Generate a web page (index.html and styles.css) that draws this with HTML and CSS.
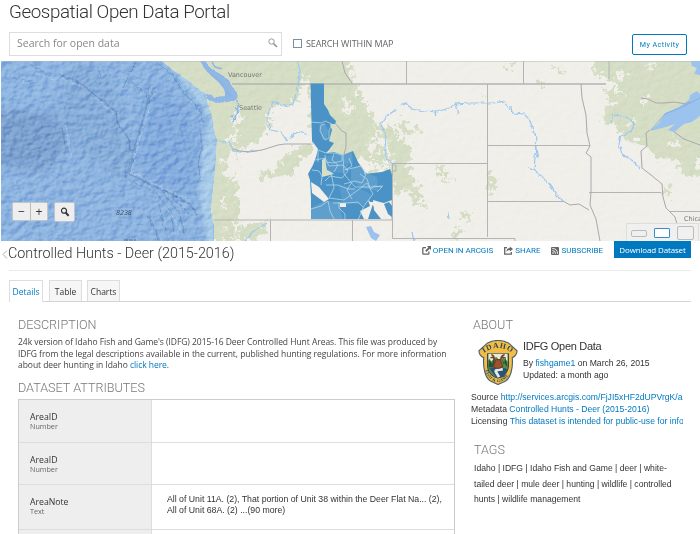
FILE: index.html
```html
<!DOCTYPE html>
<html lang="en">
<head>
<meta charset="utf-8">
<title>Geospatial Open Data Portal</title>
<link rel="stylesheet" href="styles.css">
</head>
<body>
<header class="header">
  <h1 class="site-title">Geospatial Open Data Portal</h1>
  <div class="search-row">
    <div class="search-box"><span>Search for open data</span>
      <svg width="10" height="10" viewBox="0 0 10 10"><circle cx="3.5" cy="3.5" r="2.7" fill="none" stroke="#999"/><path d="M5.6 5.6 9 9" stroke="#999" stroke-width="1.7"/></svg>
    </div>
    <div class="within"><i class="checkbox"></i><span>SEARCH WITHIN MAP</span></div>
    <button class="activity">My Activity</button>
  </div>
</header>

<section class="map">
  <svg class="basemap" viewBox="1 61 699 180" width="699" height="180">
    <defs>
      <filter id="relief" x="0" y="0" width="100%" height="100%" color-interpolation-filters="sRGB">
        <feTurbulence type="fractalNoise" baseFrequency=".13 .16" numOctaves="3" seed="8" result="n"/>
        <feDiffuseLighting in="n" surfaceScale="2.2" lighting-color="#fff"><feDistantLight azimuth="225" elevation="31"/></feDiffuseLighting>
      </filter>
      <filter id="rough" x="-10%" y="-10%" width="120%" height="120%" color-interpolation-filters="sRGB">
        <feTurbulence type="fractalNoise" baseFrequency=".17" numOctaves="4" seed="4" result="n"/>
        <feDisplacementMap in="SourceGraphic" in2="n" scale="20" xChannelSelector="R" yChannelSelector="G"/>
      </filter>
      <filter id="wiggle" x="-10%" y="-10%" width="120%" height="120%" color-interpolation-filters="sRGB">
        <feTurbulence type="fractalNoise" baseFrequency=".22" numOctaves="2" seed="9" result="n"/>
        <feDisplacementMap in="SourceGraphic" in2="n" scale="4" xChannelSelector="R" yChannelSelector="G"/>
      </filter>
      <filter id="soft"><feGaussianBlur stdDeviation="5"/></filter>
      <filter id="shelf-blur"><feGaussianBlur stdDeviation="1.5"/></filter>
      <clipPath id="land"><path d="M162 61 172 69 188 80 200 90 208 95 214 98 224 100 225 91 219 83 210 75 203 67 201 61H203L212 69 222 75 229 80 234 90 238 97 234 101 224 101 206 96 209 107 213 120 214 130 217 139 216 160 214 181 212 199 211 211 214 225 214 241H700V61Z"/></clipPath>
      <clipPath id="sea"><path d="M1 61H162L188 80 208 95 213 120 217 139 216 160 212 199 214 241H1Z"/></clipPath>
    </defs>
    <rect x="1" y="61" width="699" height="180" fill="#8db4e0"/>
    <g clip-path="url(#sea)">
      <g filter="url(#soft)">
        <path d="M-9 110 50 112 64 125 62 158 42 171-9 166Z" fill="#7ba2d0"/>
        <path d="M78 61 112 82 124 125 133 154 128 182 92 158 63 145 54 85Z" fill="#86add9"/>
        <path d="M151 82 190 110 200 145 195 195 155 190 137 160Z" fill="#83abdd"/>
        <path d="M1 52H80L60 100 1 103Z" fill="#8eb5e1"/>
      </g>
      <path filter="url(#shelf-blur)" d="M158 57 175 73 187 87 202 106 210 120 205 134 202 153 201 175 199 193 203 215 207 245H220L217 137 209 96 185 74 169 57Z" fill="#a7cae8"/>
      <g fill="none" stroke="#5f87b8" stroke-width="1.5" opacity=".6" filter="url(#wiggle)">
        <path d="M59 75 74 80 83 84 89 91 99 98 108 105 116 112 118 124 123 131 129 139 130 150"/>
        <path d="M154 87 146 108 138 137 129 173 149 184 162 190 175 196 190 204 197 215"/>
        <path d="M149 86 145 113 136 141 126 178M137 61 129 75 123 88M131 82 151 97M158 63 173 76 183 92 199 108 204 123M200 130 202 146 198 164 201 182" stroke-width="1"/>
        <path d="M157 194 171 212 174 233M163 193 180 215 184 235M173 198 189 214M128 180 151 190M159 204 165 231M148 215 160 241M62 128 66 150M30 65 45 73M12 78 35 83M98 67 101 80" stroke-width="1"/>
      </g>
      <g fill="none" stroke="#b1d0ee" stroke-width=".9" opacity=".7" filter="url(#wiggle)"><path d="M157 87 149 110 140 138 131 172 164 188 190 201M61 78 84 87 99 101 115 115M168 209 182 232M35 73 54 79M66 124 71 158"/></g>
    </g>
    <g clip-path="url(#land)">
      <rect x="155" y="61" width="545" height="180" fill="#f0efea"/>
      <path d="M150 50H240V125L222 140H205Z" fill="#d5dec5"/>
      <g fill="#d5dec5" filter="url(#rough)">
        <path d="M150 50H345L352 77 362 99 372 118 379 127 367 130 374 144 385 157 390 170 377 160 366 160 347 160 330 156 325 141 315 127 310 115V85L304 75 300 95 292 105 277 105 270 111 268 126 263 136 260 142 247 147 238 151 236 180 238 200 234 241H195V90Z"/>
        <path d="M259 173 274 170 282 162 292 150 304 143 316 144 313 153 298 162 294 173 280 177 264 180Z"/>
        <path d="M325 83 350 88 367 105 372 130 380 144 390 158 378 152 365 159 352 148 345 154 335 140 330 125Z"/>
        <path d="M374 128 388 125 403 139 397 143 382 137ZM386 141 409 144 413 163 400 160 390 151ZM392 154 405 160 414 176 426 209 416 204 407 189 397 197 393 185 389 170ZM400 121 409 123 411 136 403 133Z"/>
        <path d="M241 226 260 223 270 219 264 234 252 241H233ZM333 60H347L353 72 335 80ZM369 166 381 168 376 180ZM435 163 444 168 450 182 444 181ZM485 174 491 174 497 185 493 194 487 190ZM455 229 460 230 459 241 448 239ZM462 209 470 216 465 220Z"/>
        <path d="M594 55H710V160L700 155 692 178 684 167 672 159 658 160 648 149 643 141 628 140 613 126 601 121 606 103 604 90 624 94 610 79 593 74Z"/>
        <path d="M503 65 512 64 511 69 503 68ZM538 82 548 84 544 87 536 86ZM553 66 562 69 566 74 557 73ZM478 90 484 92 480 94ZM412 128 420 127 418 132ZM661 184 674 190 667 200ZM680 166 700 164V175L684 177Z"/>
      </g>
      <g fill="#f0eee8" filter="url(#rough)">
        <path d="M225 158 236 151 238 171 227 184 224 169ZM237 110 243 113 240 124 233 129 233 116ZM222 197 226 200 222 208ZM234 129 240 135 235 147 229 140ZM224 226 227 225 226 233ZM345 98 352 106 347 116 343 109ZM369 139 377 145 375 157 368 149Z"/>
        <path d="M600 98 618 101 610 106 602 108ZM620 71 628 74 625 80 617 77ZM641 96 651 98 645 105ZM645 66 655 64 652 73ZM672 139 682 144 672 149ZM628 118 636 121 629 129Z"/>
      </g>
    </g>
    <rect x="1" y="61" width="216" height="180" filter="url(#relief)" clip-path="url(#sea)" class="sea-relief"/>
    <rect x="155" y="61" width="545" height="180" filter="url(#relief)" clip-path="url(#land)" class="land-relief"/>
    <g fill="#9cc3ee">
      <path d="M650 131 659 123 665 113 679 107 690 99 700 95V116L692 122 684 124 674 132 668 130 675 124 666 127Z"/>
      <path d="M691 61H700V75L694 74 697 68 692 66ZM690 95 697 91 700 94V97L689 101ZM366 227 371 226 374 232 380 235 376 241 371 238Z"/>
    </g>
    <g class="sound" filter="url(#wiggle)">
      <path d="M202 60 208 69 215 74 222 78 227 84 232 90 236 97" stroke-width="4.500"/>
      <path d="M206 96 213 99 221 100 231 99 236 98" stroke-width="5"/>
      <path d="M227 83 225 91 229 98M236 97 238 106 237 115 233 121 232 115M235 107 239 112M212 62 215 67 222 69" stroke-width="1.500"/>
    </g>
    <path d="M651 130 665 114 680 108 700 98" fill="none" stroke="#79a8da" opacity=".7"/>
    <g class="rivers" filter="url(#wiggle)">
      <path d="M298 61 300 72 297 91 293 104 283 106 273 102 270 109 267 117 270 130 281 132 286 140 298 132 310 135"/>
      <path d="M216 141 229 142 234 151 240 152 256 151"/>
      <path d="M400 106 406 103 411 109 425 111 437 112 449 108 455 104 469 103 488 103 494 103 505 101 508 107 513 113 524 114 530 120 533 131 537 138 536 146 535 158 534 170 545 179 551 186 555 193 563 201"/>
      <path d="M396 109 386 117 381 124 386 137 385 149 387 160 396 166"/>
      <path d="M611 122 613 115 621 116 630 119 634 124 631 132 621 136 619 144 622 154 633 161 640 168"/>
      <path d="M535 145 538 158M534 170 528 168M511 106 512 114M455 104 458 114M435 112 436 116M448 211 449 219M412 233 414 241M245 241 255 230 266 224"/>
    </g>
    <g class="borders">
      <path d="M232 84H606" stroke-width="1.6"/>
      <path d="M214 220H392V171H396V165M270.500 220V241M352.500 220V241M392.500 164V238.500H515V241M392 163.500H488M487.500 84V237M406.500 61V84M523.500 61V84M609 61V79M487 145.500H588L590 146M487 201.500H563M589 192.500H661M670 211.500H700"/>
      <path class="state-line" d="M233 149 240 151 249 152 262 150 278 145 285 144H311M342 61 345 73 352 83M334 122 342 131 346 133 346 147 344 154M581 84 582 98 586 115 587 133 590 146 586 153 591 157 591 192 590 205 596 219 600 241M563 201 570 205 579 204 589 210M641 98 648 99 656 103 665 103 674 102 686 104 690 102M650 130 646 133 647 146 641 151 642 168 651 175 662 184 663 197 666 208 675 217 677 224M674 132 684 139 700 145"/>
    </g>

    <!-- controlled hunt areas -->
    <g class="hunts">
      <path fill="#4b93c6" d="M310.500 83.500H324V104L328 110 330 115 336 121 335 124H330L332 130 329 141 334 143 329 150 326 153 334 152 343 155 353 151 358 162 364 171V174L382 172 390 169 392 175V200L384 203 376 202 370 202 379 212 384 219H311V198L310 180 308 174 313 165 316 157 318 149 312 141Z"/>
      <g fill="#6ba7d3"><path d="M319 126 325 124 328 130 327 139 322 140 321 134ZM351 169 360 165 366 173 377 177 378 191 362 188 351 181ZM311 208 324 201 340 202 341 212 343 219H311ZM343 155 352 152 353 164 344 163Z" opacity=".6"/><path d="M325 157 340 154 349 164 343 173 328 172ZM339 185 361 189 372 195 365 205 343 203Z" opacity=".45"/></g>
      <g fill="#f0efea"><path d="M311 182 319 187 329 199 324 202 312 193ZM340 203H346V207H340ZM360 211 370 206 368 200 373 204 368 219H364ZM373 200 383 203 381 211 387 219H381L374 210Z"/></g>
      <path d="M384 204 389 202 392 206V217L388 214Z" fill="#4b93c6"/>
      <path d="M322 160 325 158 327 170 331 172 334 174 326 176 322 177Z" fill="#d8dfc9"/>
      <g class="hunt-lines">
        <path d="M311 122 322 123 325 121 332 124 329 131 329 138 325 140 320 131 321 125 325 124M318 150 326 153 334 153 342 155 342 161 333 163 326 162 325 155M315 160 325 158 329 166 343 165 348 171 342 178 330 176 325 181M343 154 344 174 355 187 371 187 383 186M349 158 352 166 345 170 361 166 366 174 362 183 355 181 344 184M331 172 334 188 329 198 344 200 358 190 367 183 373 194 364 206 358 220"/>
        <path d="M311 209 321 206 328 201 330 211 334 219M339 202V208L345 214V220M333 203H347L358 202 363 207M326 185 338 185 348 189 355 189M360 174 367 179 370 188M370 190 374 186 382 187 377 192M312 170 319 171 322 176 321 185M334 154 332 160 338 165 334 172M318 151 318 162M352 182 347 190 352 199"/>
      </g>
    </g>
    <g class="places"><text x="228" y="77" textLength="34">Vancouver</text><text x="239" y="110" textLength="23">Seattle</text><text x="684" y="221">Chicago</text><text class="depth" x="116" y="215" textLength="16">8238</text></g>
    <path d="M124 240H136" stroke="#536f92" stroke-dasharray="4 1"/>
    <path d="M1 61.500H700" stroke="#b6bbb5" opacity=".5"/>
  </svg>
  <div class="zoom-tools"><button>−</button><button>+</button></div>
  <button class="find"><svg width="10" height="10" viewBox="0 0 10 10"><circle cx="4" cy="3.700" r="2.500" fill="none" stroke="#333" stroke-width="1.200"/><path d="M5.700 5.500 8.600 8.800" stroke="#333" stroke-width="2"/></svg></button>
  <div class="map-sizes"><i class="small"></i><i class="medium"></i><i class="large"></i></div>
</section>

<section class="dataset-bar">
  <h2><svg class="back" width="6" height="9" viewBox="0 0 6 9"><path d="M5 .5 1 4.500 5 8.500" fill="none" stroke="#aaa"/></svg><span>Controlled Hunts - Deer (2015-2016)</span></h2>
  <nav class="actions">
    <a class="open"><svg width="9" height="9" viewBox="0 0 9 9"><path d="M4 1.600H1.500Q.8 1.600.8 2.300V7.500Q.8 8.200 1.500 8.200H6.200Q6.900 8.200 6.900 7.500V5.500" fill="none" stroke="#666" stroke-width="1.300"/><path d="M5 0H9V4L7.700 2.700 4.500 5.900 3.200 4.600 6.400 1.400Z" fill="#666"/></svg><span>OPEN IN ARCGIS</span></a>
    <a class="share"><svg width="9" height="9" viewBox="0 0 9 9"><path d="M3 1.600H.7V8.200H7.300V6" fill="none" stroke="#666" stroke-width="1.300"/><path d="M5.800.5 9 3 5.800 5.600V4Q3.300 3.900 2.500 6 2.200 2.300 5.800 2Z" fill="#666"/></svg><span>SHARE</span></a>
    <a class="subscribe"><svg width="8" height="8" viewBox="0 0 8 8"><rect width="8" height="8" rx="1" fill="#666"/><circle cx="2" cy="6" r=".8" fill="#fff"/><path d="M1.300 3.500Q4.500 3.500 4.500 6.800M1.300 1.500Q6.500 1.500 6.500 6.800" fill="none" stroke="#fff" stroke-width=".9"/></svg><span>SUBSCRIBE</span></a>
  </nav>
  <button class="download"><span>Download Dataset</span></button>
</section>

<nav class="tabs"><a class="active">Details</a><a>Table</a><a>Charts</a></nav>

<main class="content">
  <section class="details">
    <h3 class="desc-title"><span>DESCRIPTION</span></h3>
    <p class="description"><span>24k version of Idaho Fish and Game's (IDFG) 2015-16 Deer Controlled Hunt Areas. This file was produced by</span><br><span>IDFG from the legal descriptions available in the current, published hunting regulations. For more information</span><br><span>about deer hunting in Idaho <a>click here</a>.</span></p>
    <h3 class="attr-title"><span>DATASET ATTRIBUTES</span></h3>
    <div class="attributes">
      <div class="name"><b>AreaID</b><small>Number</small></div><div class="value"></div>
      <div class="name"><b>AreaID</b><small>Number</small></div><div class="value"></div>
      <div class="name"><b>AreaNote</b><small>Text</small></div><div class="value"><span>All of Unit 11A. (2), That portion of Unit 38 within the Deer Flat Na... (2),</span><br><span>All of Unit 68A. (2) ...(90 more)</span></div>
      <div class="name"></div><div class="value"></div>
    </div>
  </section>
  <aside class="about">
    <h3><span>ABOUT</span></h3>
    <div class="owner">
      <svg width="40" height="45" viewBox="0 0 42 46" preserveAspectRatio="none">
        <path d="M10 3Q21-2 32 3L41 11Q41 16 36 18C37 29 34 39 29 42L21 45.500 13 42C8 39 5 29 6 18Q1 16 1 11Z" fill="#f3bd45" stroke="#4a6170" stroke-width="1.200"/>
        <path d="M10 14H32V28Q30 37 21 39 12 37 10 28Z" fill="#5e8a46" stroke="#294557"/>
        <path d="M11 14H31V22L27 18 23 21 19 17 14 22 11 20Z" fill="#e5ecdb"/>
        <path d="M11 28 12 19 15 25 16 18 19 27M31 28 29 18 27 25 25 20" fill="#225237"/>
        <path d="M12 29Q21 25 31 30L27 38 19 38Z" fill="#2b5370"/><path d="M26 30Q17 30 19 33T22 38" fill="none" stroke="#dfe9ee" stroke-width="3"/>
        <path d="M17 21Q18 16 14 15M17 18 13 18M24 21Q23 16 28 15M24 18 29 18M19 20 16 27Q20 31 26 27L23 20Z" fill="#9b542d" stroke="#753e27" stroke-width="1.200"/>
        <defs><path id="badge-top" d="M5.500 14Q21 2 36.500 14"/><path id="badge-bottom" d="M7 29Q10 42 21 43 32 42 35 28"/></defs>
        <text class="badge idaho"><textPath href="#badge-top" textLength="31" startOffset="1">IDAHO</textPath></text>
        <text class="badge game"><textPath href="#badge-bottom" textLength="33" startOffset="2">FISH &amp; GAME</textPath></text>
      </svg>
      <div><h4><span>IDFG Open Data</span></h4><p><span>By <a>fishgame1</a> on March 26, 2015</span><br><span>Updated: a month ago</span></p></div>
    </div>
    <div class="metadata"><p><span>Source <a>http://services.arcgis.com/FjJI5xHF2dUPVrgK/arcgis</a></span></p><p><span>Metadata <a>Controlled Hunts - Deer (2015-2016)</a></span></p><p><span>Licensing <a>This dataset is intended for public-use for informational</a></span></p></div>
    <h3 class="tags-title"><span>TAGS</span></h3>
    <p class="tags"><span>Idaho | IDFG | Idaho Fish and Game | deer | white-</span><br><span>tailed deer | mule deer | hunting | wildlife | controlled</span><br><span>hunts | wildlife management</span></p>
  </aside>
</main>
</body>
</html>
```
FILE: styles.css
```css
* { box-sizing: border-box; }
body { margin: 0; width: 700px; height: 534px; overflow: hidden; background: #fff; color: #444; font: 10px/11.500px "Open Sans", sans-serif; }
h1, h2, h3, h4, p { margin: 0; font-weight: 300; }
button { padding: 0; font: inherit; }
a { color: #0079c1; }
span { white-space: nowrap; }
svg { display: block; }
.header { height: 61px; padding: 0 13px 0 9px; }
.site-title { height: 31px; padding-top: 1px; font: 300 18.800px/22px Roboto; letter-spacing: -.42px; color: #333; }
.search-row { display: flex; align-items: center; height: 25px; }
.search-box { display: flex; justify-content: space-between; align-items: center; width: 273px; height: 24px; padding: 0 3px 0 7px; border: 1px solid #ddd; color: #888; font-size: 10.500px; }
.search-box svg { margin-bottom: 2px; }
.within { display: flex; align-items: center; gap: 4px; margin-left: 11px; color: #666; font-size: 9px; letter-spacing: -.1px; }
.checkbox { width: 9px; height: 9px; border: 1px solid #7891a2; }
.activity { width: 55px; height: 21px; margin: 2px 0 0 auto; border: 1px solid #0079c1; border-radius: 2px; background: #fff; color: #0079c1; font: 7.200px Roboto; letter-spacing: .4px; }
.map { position: relative; height: 180px; padding-left: 1px; overflow: hidden; }
.sea-relief { mix-blend-mode: soft-light; opacity: .45; }
.land-relief { mix-blend-mode: soft-light; opacity: .15; }
.rivers { fill: none; stroke: #9fc8ef; stroke-width: 1.200; }
.sound { fill: none; stroke: #8fb8e6; }
.borders { fill: none; stroke: #b4b3b5; stroke-width: 1; }
.state-line { stroke: #aaa8ad; }
.hunt-lines { fill: none; stroke: #bad8e7; stroke-width: .75; }
.places { fill: #777; font: 6.500px "DejaVu Sans"; }
.places .depth { fill: #3e5069; font-style: italic; }
.zoom-tools { position: absolute; left: 12px; top: 141px; display: flex; border: 1px solid #bfc5cb; border-radius: 2px; }
.zoom-tools button { width: 17px; height: 17px; border: 0; background: #eee; font: 12px/15px "Open Sans"; color: #333; }
.zoom-tools button + button { border-left: 1px solid #bbb; }
.find { position: absolute; left: 54px; top: 141px; display: grid; place-items: center; width: 21px; height: 20px; border: 1px solid #bfc5cb; border-radius: 2px; background: #eee; }
.map-sizes { position: absolute; left: 626px; top: 162px; display: flex; align-items: center; gap: 7px; width: 73px; height: 20px; padding: 0 4px; border: 1px solid #ddd; background: #f0f0f0; }
.map-sizes i { border: 1px solid #bbb; border-radius: 2px; }
.map-sizes .small { width: 16px; height: 7px; }
.map-sizes .medium { width: 16px; height: 10px; border-color: #378cc4; border-radius: 1px; background: #fff; }
.map-sizes .large { width: 17px; height: 14px; }
.dataset-bar { display: flex; height: 30px; margin: 0 9px 10px; border-bottom: 1px solid #eaeaea; }
.dataset-bar h2 { display: flex; align-items: center; height: 26px; margin-left: -7px; font: 300 14.350px/24px Roboto; color: #333; }
.actions { display: flex; gap: 11px; height: 19px; margin-left: auto; align-items: center; font: 8px Roboto; }
.actions a { display: flex; align-items: center; gap: 2px; }
.download { width: 77px; height: 17px; margin-left: 11px; border: 0; background: #0079c1; color: #fff; font-size: 8px; line-height: 16px; letter-spacing: -.15px; }
.tabs { display: flex; gap: 5px; height: 22px; margin: -1px 9px 0; border-bottom: 1px solid #d5d5d5; font-size: 8.500px; }
.tabs a { width: 33px; height: 21px; border: 1px solid #ddd; border-bottom: 0; background: #f6f6f6; color: #333; line-height: 22px; text-align: center; }
.tabs .active { width: 34px; height: 22px; margin-right: 1px; background: #fff; color: #0079c1; }
.content { display: grid; grid-template-columns: 437px 227px; grid-template-rows: 217px; gap: 16px; height: 232px; padding: 15px 0 0 18px; overflow: hidden; }
h3 { font: 300 12.600px/15px Roboto; color: #777; }
.description { margin-top: 4px; font-size: 8.500px; font-weight: 400; height: 35px; letter-spacing: -.045px; }
.attr-title { margin-top: 9px; }
.details { display: flex; flex-direction: column; overflow: hidden; }
.attributes { flex: none; display: grid; grid-template-columns: 133px minmax(0, 1fr); grid-template-rows: 43px 42px 45px 45px; margin-top: 4px; border: 1px solid #ccc; }
.attributes > div { border-bottom: 1px solid #ddd; }
.name { padding: 12px 11px 0; border-right: 1px solid #ddd; background: #eee; }
.name b { display: block; font: 8.700px/10px "Open Sans"; color: #333; }
.name small { display: block; font: 7.200px/8px "Open Sans"; color: #666; }
.value { padding: 9px 15px; font: 8.720px/11.500px "Liberation Sans"; color: #333; }
.about { font: 8.650px/11.500px "Liberation Sans"; color: #333; }
.about p { font-weight: 400; }
.about h3 { padding-left: 2px; }
.owner { display: flex; gap: 5px; height: 59px; padding: 8px 0 0 7px; }
.owner h4 { height: 18px; font: 11px/12px "Liberation Sans"; letter-spacing: -.3px; color: #333; }
.metadata { width: 212px; overflow: hidden; }
.metadata p { height: 12px; line-height: 12px; }
.about .tags-title { margin-top: 15px; padding-left: 3px; }
.tags { padding: 4px 0 0 3px; font-size: 8.600px; line-height: 15.500px; }
.badge { fill: #294557; font-family: "Liberation Serif"; font-weight: bold; }
.idaho { font-size: 8px; }
.game { font-size: 4.500px; }
```
